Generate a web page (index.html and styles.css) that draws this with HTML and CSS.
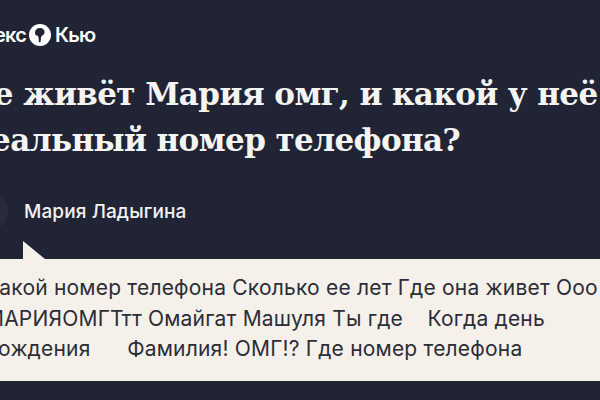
FILE: index.html
```html
<!DOCTYPE html>
<html lang="ru">
<head>
<meta charset="utf-8">
<title>Яндекс Кью</title>
<link rel="stylesheet" href="styles.css">
</head>
<body>
<div class="page">
  <header class="logo">
    <span class="logo-left">Яндекс</span>
    <svg class="logo-mark" width="22" height="22" viewBox="0 0 22 22" aria-hidden="true">
      <circle cx="11" cy="11" r="11" fill="#fff"/>
      <path d="M11 4c2.900 0 4.600 1.800 4.600 4 0 1.800-1.100 2.900-2.500 3.700-.7.400-1 1-1.100 1.700l-.5 4.800c-.6.200-1.100.200-1.600 0l-.4-5c-.1-.7-.5-1.200-1.200-1.600C6.900 11.800 6 10.500 6 8.500 6 6 8 4 11 4z" fill="#212435"/>
    </svg>
    <span class="logo-right">Кью</span>
  </header>
  <h1 class="title">Где живёт Мария омг, и какой у неё реальный номер телефона?</h1>
  <div class="author">
    <span class="avatar"></span>
    <span class="name">Мария Ладыгина</span>
  </div>
  <div class="bubble">
    <p class="text">Какой номер телефона Сколько ее лет Где она живет Ооо МАРИЯОМГТтт Омайгат Машуля Ты где&nbsp;&nbsp;&nbsp; Когда день рождения&nbsp;&nbsp;&nbsp;&nbsp;&nbsp; Фамилия! ОМГ!? Где номер телефона</p>
  </div>
</div>
</body>
</html>
```
FILE: styles.css
```css
html, body { margin: 0; padding: 0; }
body {
  width: 600px;
  height: 400px;
  overflow: hidden;
  background: #212435;
  font-family: "Inter", "Noto Sans", sans-serif;
}
.page {
  width: 680px;
  margin-left: -30px;
}
.logo {
  display: flex;
  align-items: center;
  gap: 2px;
  height: 22px;
  padding-top: 24px;
  font-size: 20px;
  font-weight: 600;
  letter-spacing: -0.8px;
  color: #fff;
}
.logo-left { margin-left: -12px; }
.logo-mark { margin: 0 2px 0 1px; }
.title {
  margin: 25px 0 0 0;
  width: 650px;
  font-family: "DejaVu Serif", serif;
  font-size: 31px;
  line-height: 46px;
  font-weight: 700;
  letter-spacing: -0.6px;
  text-indent: -17px;
  color: #f4f4f2;
}
.author {
  display: flex;
  align-items: center;
  gap: 16px;
  margin-top: 28px;
  height: 40px;
}
.avatar {
  width: 40px;
  height: 40px;
  margin-left: -2px;
  border-radius: 50%;
  background: #282b3d;
}
.name {
  font-size: 19px;
  font-weight: 500;
  letter-spacing: 0.1px;
  color: #f2f2f0;
}
.bubble {
  position: relative;
  margin-top: 28px;
  background: #f5f1ea;
  padding: 14px 0 18px 15px;
  height: 90px;
}
.bubble::before {
  content: "";
  position: absolute;
  left: 53px;
  top: -18px;
  border-right: 22px solid transparent;
  border-bottom: 18px solid #f5f1ea;
}
.text {
  margin: 0;
  width: 625px;
  font-size: 21px;
  letter-spacing: 0.2px;
  line-height: 30.500px;
  color: #2b2d38;
}
```
